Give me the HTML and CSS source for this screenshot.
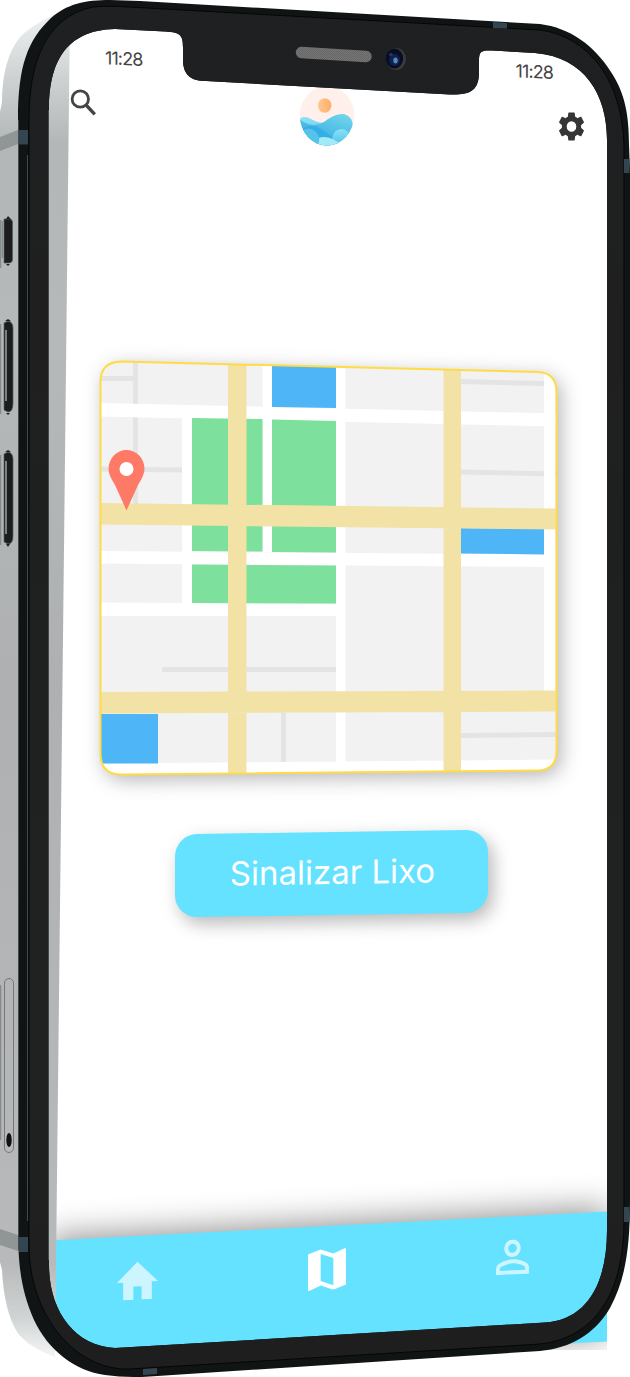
FILE: index.html
```html
<!DOCTYPE html>
<html lang="pt">
<head>
<meta charset="utf-8">
<title>Sinalizar Lixo</title>
<link rel="stylesheet" href="styles.css">
</head>
<body>
<div class="device">
  <main class="screen">
    <div class="status"><span>11:28</span><span class="status-right">11:28</span></div>
    <header class="header">
      <svg class="search" viewBox="0 0 28 30" aria-label="Buscar"><circle cx="10.3" cy="11" r="8.2" fill="none" stroke="#444" stroke-width="2.8"/><path d="M16.5 17.5 24.8 26.4" stroke="#444" stroke-width="3.3"/></svg>
      <svg class="logo" viewBox="0 0 56 60" aria-label="Logo">
        <defs>
          <clipPath id="disc"><ellipse cx="28" cy="30" rx="27" ry="29.5"/></clipPath>
          <linearGradient id="wave" x1="1" y1="0" x2=".4" y2="1"><stop offset="0" stop-color="#78d8ec"/><stop offset="1" stop-color="#2fa9e2"/></linearGradient>
          <linearGradient id="foam" x1="0" y1="0" x2="0" y2="1"><stop offset="0" stop-color="#8ce1f5"/><stop offset="1" stop-color="#4bbfe9"/></linearGradient>
          <linearGradient id="sun"><stop offset="0" stop-color="#ffc88f"/><stop offset="1" stop-color="#ffae6c"/></linearGradient>
        </defs>
        <ellipse cx="28" cy="29.5" rx="27.3" ry="29.3" fill="#fff0ec"/>
        <ellipse cx="25.7" cy="19.5" rx="6.7" ry="7.3" fill="url(#sun)"/>
        <g clip-path="url(#disc)">
          <path d="M0 33Q5 29 12 33T25 37L24 60H0Z" fill="url(#foam)"/>
          <path d="M0 33Q12 43 25 36Q36 27 45 28Q54 30 54 42L48 60H8Z" fill="url(#wave)"/>
          <path d="M2 44Q12 36 22 43Q32 49 42 60H8Z" fill="#35aee3"/>
          <path d="M33 54Q34 43 43 43Q49 44 51 50L45 60H33Z" fill="url(#foam)"/>
          <path d="M16 60Q17 51 24 51Q35 51 43 60Z" fill="#a3eaf7"/>
          <path d="M2 46Q10 39 17 46Q23 53 18 60H5Z" fill="#54c4eb"/>
        </g>
      </svg>
      <svg class="gear" viewBox="1.9 1.4 20.2 21.2" preserveAspectRatio="none" aria-label="Ajustes"><path fill="#353535" d="M19.14 12.94c.04-.3.06-.61.06-.94 0-.32-.02-.64-.07-.94l2.03-1.58a.49.49 0 0 0 .12-.61l-1.92-3.32a.49.49 0 0 0-.59-.22l-2.39.96c-.5-.38-1.03-.7-1.62-.94l-.36-2.54a.48.48 0 0 0-.48-.41h-3.84a.47.47 0 0 0-.47.41l-.36 2.54c-.59.24-1.13.57-1.62.94l-2.39-.96a.48.48 0 0 0-.59.22L2.74 8.87a.47.47 0 0 0 .12.61l2.03 1.58c-.05.3-.09.63-.09.94s.02.64.07.94l-2.03 1.58a.49.49 0 0 0-.12.61l1.92 3.32c.12.22.37.29.59.22l2.39-.96c.5.38 1.03.7 1.62.94l.36 2.54c.05.24.24.41.48.41h3.84c.24 0 .44-.17.47-.41l.36-2.54c.59-.24 1.13-.56 1.62-.94l2.39.96c.22.08.47 0 .59-.22l1.92-3.32a.47.47 0 0 0-.12-.61zM12 15.6A3.6 3.6 0 1 1 12 8.4a3.6 3.6 0 0 1 0 7.2z"/></svg>
    </header>

    <svg class="map" viewBox="99 384 460 417" aria-label="Mapa">
      <defs><clipPath id="card"><path id="cardShape" d="M121 385.5 538 396Q556.500 397 556.500 416V775Q556.500 794 538 794.500L121 798.500Q100.500 798 100.500 778V406Q100.500 386 121 385.500Z"/></clipPath></defs>
      <use href="#cardShape" class="card-shadow"/>
      <g clip-path="url(#card)">
        <path fill="#f2f2f2" d="M99 384H559V801H99Z"/>
        <path fill="none" stroke="#e4e4e4" stroke-width="5" d="M135.500 385V528M100 402.500H134M100 493 183 494M461 405.500 544 407.500M461 496 557 498M162 693.500H336M283.500 737V787M461 759.500 557 758.500"/>
        <path fill="#fff" d="M100 427 557 437.500V450.500L100 440.500ZM100 575 557 578.500V591L100 587.500ZM100 626.500 341 628V640H100ZM182 440H192V627H182ZM262.500 385H272V576H262.500ZM336 385H345.500V800H336ZM544 385H555V716H544ZM100 787.500 557 783.500V801H100Z"/>
        <path fill="#7de09c" d="M192 442 262.500 443V575.500L192 575ZM272 443.500 336 445V576.500L272 576ZM192 588.500 336 589.500V627.500L192 627Z"/>
        <path fill="#4eb5f7" d="M272 385H336V432L272 431ZM461 552 544 553V578.500L461 577.500ZM100 738H158V787.500H100Z"/>
        <path fill="#f2e2a6" d="M228 385H246.500V801H228ZM443.500 385H461V801H443.500ZM100 527 557 532.500V553.500L100 548.500ZM100 716 557 714.500V735.500L100 737.500Z"/>
        <path fill="#ff7967" fill-rule="evenodd" d="M126.500 474A18 19 0 0 1 144.500 493Q144.500 499 138 509L126.500 534.500 115 509Q108.500 499 108.500 493A18 19 0 0 1 126.500 474Z"/>
        <circle cx="126.500" cy="493" r="7" fill="#fff"/>
      </g>
      <use href="#cardShape" fill="none" stroke="#ffdc45" stroke-width="2"/>
    </svg>

    <button class="report">Sinalizar Lixo</button>

    <nav class="nav">
      <svg class="home" viewBox="2 3 20 17" preserveAspectRatio="none"><path fill="#cdf5ff" d="M10 20v-6h4v6h5v-8h3L12 3 2 12h3v8z"/></svg>
      <svg class="map-icon" viewBox="3 3 18 18" preserveAspectRatio="none"><path fill="#fff" d="m20.500 3-.16.03L15 5.100 9 3 3.360 4.900a.5.500 0 0 0-.36.480V20.500a.5.500 0 0 0 .66.470L9 18.900l6 2.100 5.640-1.900a.5.500 0 0 0 .36-.480V3.500a.5.500 0 0 0-.5-.5zM15 19l-6-2.110V5l6 2.110z"/></svg>
      <svg class="person" viewBox="4 4 16 16" preserveAspectRatio="none"><path fill="#cdf5ff" d="M12 5.900a2.100 2.100 0 1 1 0 4.200 2.100 2.100 0 0 1 0-4.200m0 9c2.970 0 6.100 1.460 6.100 2.100v1.100H5.900V17c0-.64 3.130-2.100 6.100-2.100M12 4a4 4 0 1 0 0 8 4 4 0 0 0 0-8zm0 9c-2.670 0-8 1.340-8 4v3h16v-3c0-2.660-5.330-4-8-4z"/></svg>
    </nav>
  </main>

  <svg class="frame" viewBox="0 0 630 1377" aria-hidden="true">
    <defs>
      <linearGradient id="steel" x1="0" y1="0" x2="0" y2="1"><stop offset="0" stop-color="#f1f4f4"/><stop offset=".05" stop-color="#cfd3d3"/><stop offset=".1" stop-color="#b3b7b8"/><stop offset=".25" stop-color="#b5b9ba"/><stop offset=".5" stop-color="#aeb0b1"/><stop offset=".93" stop-color="#b8b9ba"/><stop offset=".97" stop-color="#d0d3d3"/><stop offset="1" stop-color="#f4f6f6"/></linearGradient>
      <linearGradient id="glass" x1="0" y1="0" x2="0" y2="1"><stop offset="0" stop-color="#1e2021"/><stop offset=".25" stop-color="#1f1f1f"/><stop offset=".37" stop-color="#1e201f"/><stop offset=".75" stop-color="#202121"/><stop offset="1" stop-color="#1e1e1f"/></linearGradient>
      <pattern id="mesh" width="2" height="2" patternUnits="userSpaceOnUse"><path fill="#777" d="M0 0H2V2H0Z"/><path fill="#666" d="M0 0H1V1H0ZM1 1H2V2H1Z"/></pattern>
    </defs>
    <path fill="url(#steel)" d="M70 8Q38 20 20 37 2 60 2 102L0 112V1262L2 1270Q4 1310 17 1332 28 1347 55 1357Z"/>
    <path fill="#909596" d="M0 137 18 130V144L0 151ZM0 1229 18 1235V1251L0 1245Z"/>
    <path fill="#111414" fill-rule="evenodd" d="M18 120C18 65 28 40 51 18 67 4 85 0 110 0L140 1 540 24C570 28 594 45 611 72 625 93 629 115 629 145L630 170V1200C630 1250 625 1280 610 1308 594 1335 570 1348 540 1351L150 1376.500Q125 1378 105 1375C75 1371 48 1350 34 1320 22 1292 18 1270 18 1225Z
      M49 110C49 65 64 30 115 29L165 31.500C182 32 183 37 183 48V62C184 76 192 81 206 81L450 94.500C470 95 479 91 479 72V60C479 51 482 50 492 50.500L535 53C585 57 607 95 607 140V1230C607 1285 586 1320 545 1322.500L115 1348C74 1346 49 1310 49 1265Z"/>
    <path fill="url(#glass)" fill-rule="evenodd" d="M29 120C29 63 45 17 93 7Q103 6 120 6.500L540 30C585 36 623 76 624 148V1220C624 1295 594 1338 540 1344L130 1369C75 1371 29 1315 29 1245Z
      M49 110C49 65 64 30 115 29L165 31.500C182 32 183 37 183 48V62C184 76 192 81 206 81L450 94.500C470 95 479 91 479 72V60C479 51 482 50 492 50.500L535 53C585 57 607 95 607 140V1230C607 1285 586 1320 545 1322.500L115 1348C74 1346 49 1310 49 1265Z"/>
    <path fill="none" stroke="#050606" stroke-width="1" d="M29 120C29 63 45 17 93 7Q103 6 120 6.500L540 30C585 36 623 76 624 148V1220C624 1295 594 1338 540 1344L130 1369C75 1371 29 1315 29 1245Z"/>
    <path fill="none" stroke="#454949" stroke-width="1" d="M18.500 120V1250M27.500 155V1221M48.500 110V1260"/>
    <path fill="#334551" d="M19 130H28V144.500H19ZM19 1237H28V1252H19ZM493 22 507 23V28.500L493 28ZM624 159H629.500V173H624ZM624 1207H629.500V1222H624ZM143 1369 157 1368V1374L143 1375Z"/>
    <g fill="#1c1e1e" stroke="#555b5c" stroke-width=".7">
      <path d="M4 219H10Q12 219 12.500 222V260Q12 263 9 263H4Z"/>
      <path d="M4 323 8 321Q13 322 13 328V403Q13 412 8 412L4 410Z"/>
      <path d="M4 454 8 452Q13 453 13 459V536Q13 544 8 544L4 542Z"/>
    </g>
    <path fill="none" stroke="#858b8d" stroke-width="1.500" d="M.5 220V268M2.500 221V258M.5 324V414M.5 455V545M.5 985V1140"/>
    <path fill="none" stroke="#e0e2e2" stroke-width="1" d="M6 330V401M6 461V534"/>
    <path fill="#222" d="M6 219 8 216 11 219ZM5 321 8 319 11 321ZM5 452 8 450 11 452ZM6 264H10L8 266ZM6 413H10L8 415ZM6 544H10L8 547Z"/>
    <rect x="4.500" y="978.500" width="9" height="174" rx="4.500" fill="none" stroke="#666a6b" stroke-width=".8"/>
    <ellipse cx="9" cy="1140" rx="2.700" ry="7" fill="#111"/>
    <path d="M301.500 52.500 366 56.500" stroke="url(#mesh)" stroke-width="11.500" stroke-linecap="round"/>
    <ellipse cx="396" cy="59" rx="10" ry="11" fill="#3a3c3c"/>
    <ellipse cx="394.500" cy="58.500" rx="8.700" ry="10" fill="#080d24"/>
    <ellipse cx="394.500" cy="60" rx="5.500" ry="6" fill="#10214b"/>
    <ellipse cx="395.500" cy="60.500" rx="2.200" ry="3" fill="#5688bd"/>
    <ellipse cx="391" cy="54.500" rx="2" ry="1.500" fill="#2b3261"/>
  </svg>
</div>
</body>
</html>
```
FILE: styles.css
```css
* { box-sizing: border-box; }
body { margin: 0; background: #fff; font-family: Inter, "Open Sans", sans-serif; }
.device { display: grid; width: 630px; height: 1377px; overflow: hidden; }
.screen, .frame { grid-area: 1 / 1; }
.frame { display: block; width: 630px; height: 1377px; z-index: 1; pointer-events: none; }
.screen { display: flex; flex-direction: column; height: 1350px; margin: 0 23px 0 49px; overflow: hidden; background: #fff; }
.status { display: flex; justify-content: space-between; height: 46px; margin-top: 48px; padding: 0 54px 0 56px; color: #454545; font-size: 18px; line-height: 22px; letter-spacing: -.9px; transform: skewY(2.500deg); }
.status span { transform: translateY(9px); }
.status .status-right { transform: translateY(4px); }
.header { display: flex; justify-content: space-between; align-items: flex-start; height: 76px; padding: 16px 22px 0 21px; }
.search { width: 28px; height: 30px; margin-top: 2px; }
.logo { width: 56px; height: 60px; margin-left: -3px; }
.gear { width: 27px; height: 31px; margin-top: 25px; }
.map { display: block; width: 460px; height: 417px; margin: 214px 0 0 50px; overflow: visible; flex: none; }
.card-shadow { fill: #fff; filter: drop-shadow(4px 5px 10px rgba(0, 0, 0, .3)); }
.report { flex: none; width: 313px; height: 83px; margin: 55px 0 0 126px; padding: 0 0 2px 2px; border: 0; border-radius: 22px; background: #64e2ff; box-shadow: 5px 7px 18px rgba(0, 0, 0, .28); color: #fff; font: 400 33px/1 Inter, "Open Sans", sans-serif; white-space: nowrap; transform: skewY(-.85deg); }
.nav { display: flex; flex: none; justify-content: space-between; align-items: flex-start; height: 130px; margin-top: 311px; padding: 22px 78px 0 68px; background: #64e2ff; box-shadow: 0 -4px 32px rgba(0, 0, 0, .42); transform: skewY(-2.950deg); }
.home { width: 41px; height: 38px; margin-top: 4px; }
.map-icon { width: 38px; height: 41px; margin-top: 1px; }
.person { width: 33px; height: 35px; margin-top: 1px; }
```
